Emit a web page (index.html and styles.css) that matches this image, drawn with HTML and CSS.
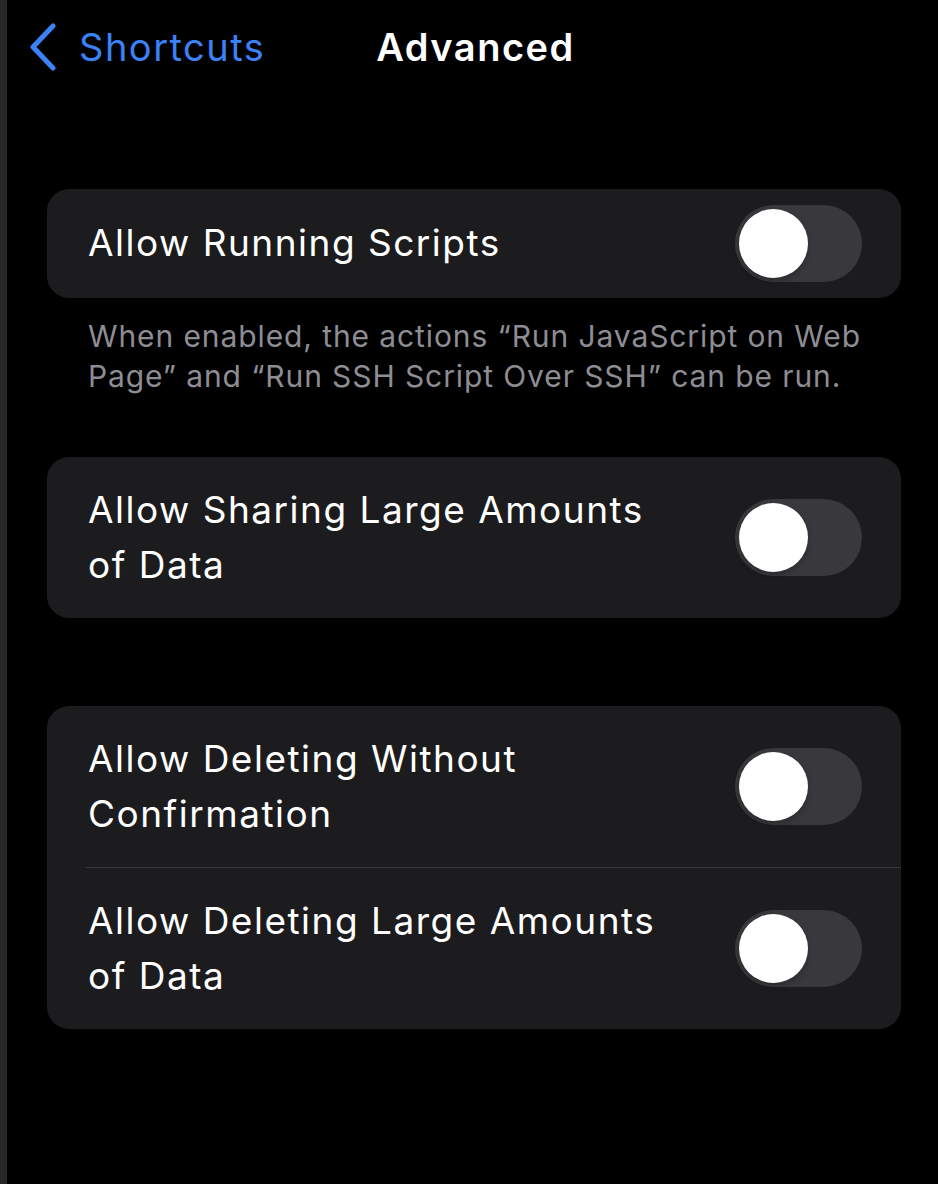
FILE: index.html
```html
<!DOCTYPE html>
<html lang="en">
<head>
<meta charset="utf-8">
<title>Advanced</title>
<link rel="stylesheet" href="styles.css">
</head>
<body>
<div class="app">
  <div class="edge"></div>
  <main class="screen">
    <header class="nav">
      <a class="back" href="#">
        <svg class="chev" width="30" height="48" viewBox="0 0 30 48" aria-hidden="true">
          <path d="M25 3 L5 24 L25 45" fill="none" stroke="#3b82f6" stroke-width="5" stroke-linecap="round" stroke-linejoin="round"/>
        </svg>
        <span>Shortcuts</span>
      </a>
      <h1 class="title">Advanced</h1>
    </header>

    <section class="group first">
      <div class="card">
        <div class="row">
          <div class="label">Allow Running Scripts</div>
          <div class="toggle"><div class="knob"></div></div>
        </div>
      </div>
      <p class="footer">When enabled, the actions “Run JavaScript on Web Page” and “Run SSH Script Over SSH” can be run.</p>
    </section>

    <section class="group second">
      <div class="card">
        <div class="row">
          <div class="label">Allow Sharing Large Amounts of Data</div>
          <div class="toggle"><div class="knob"></div></div>
        </div>
      </div>
    </section>

    <section class="group third">
      <div class="card">
        <div class="row">
          <div class="label">Allow Deleting Without Confirmation</div>
          <div class="toggle"><div class="knob"></div></div>
        </div>
        <div class="sep"></div>
        <div class="row">
          <div class="label">Allow Deleting Large Amounts of Data</div>
          <div class="toggle"><div class="knob"></div></div>
        </div>
      </div>
    </section>
  </main>
</div>
</body>
</html>
```

FILE: styles.css
```css
* { box-sizing: border-box; }
html, body {
  margin: 0;
  padding: 0;
  background: #000;
  height: 100%;
}
body {
  font-family: Inter, "Noto Sans", "Liberation Sans", sans-serif;
  color: #fff;
}
.app {
  display: flex;
  min-height: 1184px;
}
.edge {
  width: 7px;
  background: #282828;
  flex: none;
}
.screen {
  flex: 1;
  background: #000;
}
.nav {
  height: 94px;
  display: flex;
  align-items: center;
  position: relative;
}
.back {
  display: flex;
  align-items: center;
  gap: 21px;
  margin-left: 21px;
  color: #3b82f6;
  text-decoration: none;
  font-size: 38px;
  letter-spacing: 1.5px;
}
.chev { display: block; }
.title {
  position: absolute;
  left: 0;
  right: 0;
  top: 0;
  bottom: 0;
  margin: 0;
  display: flex;
  align-items: center;
  justify-content: center;
  padding-left: 6px;
  font-size: 38px;
  font-weight: 600;
  pointer-events: none;
  letter-spacing: 1.5px;
}
.group {
  margin: 0 37px 0 40px;
}
.group.first { margin-top: 95px; }
.group.second { margin-top: 61px; }
.group.third { margin-top: 88px; }
.card {
  background: #1c1c1e;
  border-radius: 22px;
  overflow: hidden;
}
.row {
  display: flex;
  align-items: center;
  justify-content: space-between;
  min-height: 109px;
  padding: 0 39px 0 41px;
}
.label {
  font-size: 37px;
  line-height: 54.5px;
  padding: 26px 0;
  max-width: 592px;
  letter-spacing: 1.5px;
}
.sep {
  height: 1px;
  background: #3a3a3c;
  margin-left: 39px;
}
.toggle {
  flex: none;
  width: 127px;
  height: 77px;
  border-radius: 39px;
  background: #39393d;
  padding: 4px;
}
.knob {
  width: 69px;
  height: 69px;
  border-radius: 50%;
  background: #fff;
  box-shadow: 0 3px 6px rgba(0,0,0,0.25);
}
.footer {
  margin: 0;
  padding: 18px 30px 0 41px;
  font-size: 30px;
  line-height: 40px;
  color: #8d8d93;
  letter-spacing: 0.9px;
}
```
